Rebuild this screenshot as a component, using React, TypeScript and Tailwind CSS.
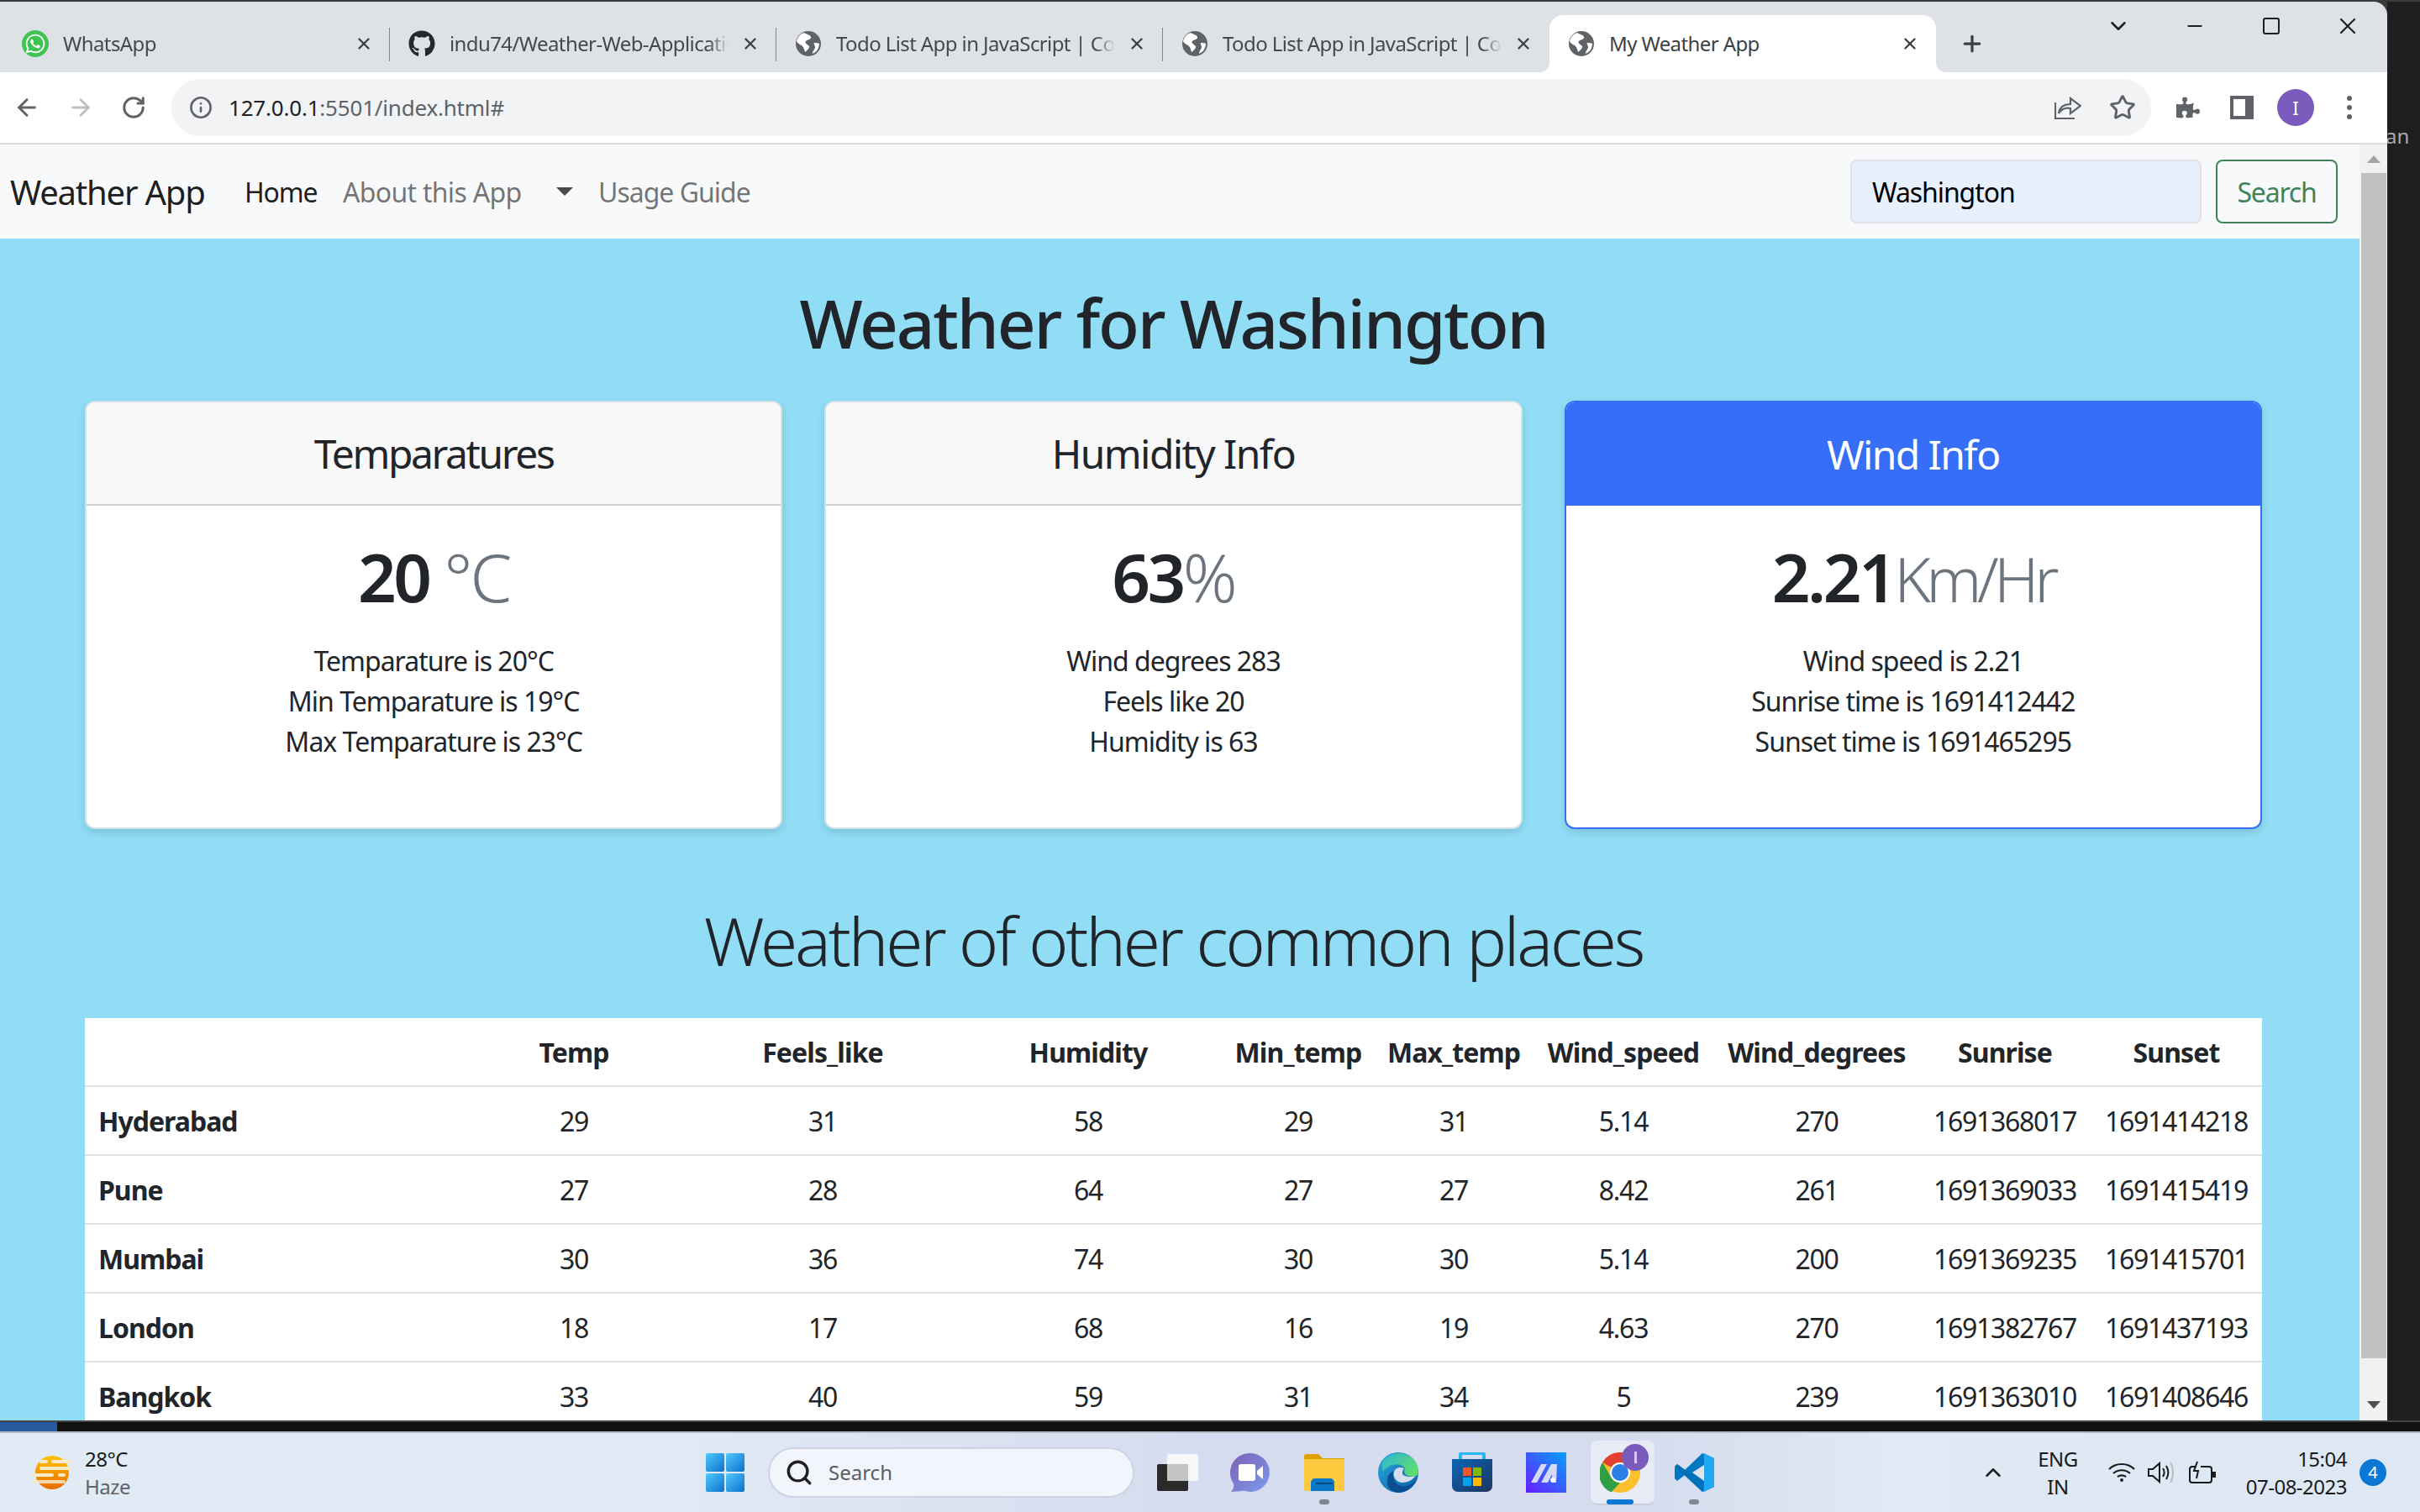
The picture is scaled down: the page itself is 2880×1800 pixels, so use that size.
import React from 'react';
import { ArrowLeft, ArrowRight, RotateCw, Info, Star, ChevronDown, ChevronUp, X, Plus, Minus, Search } from 'lucide-react';
import { FaGithub, FaWhatsapp, FaPuzzlePiece } from 'react-icons/fa';

const Globe = () => (
  <svg viewBox="0 0 32 32" className="w-[32px] h-[32px] shrink-0">
    <circle cx="16" cy="16" r="15" fill="#5f6368" />
    <path d="M11 3c3 2 7 2 8 5 1 3-4 3-6 5-2 2 2 4 4 6 1 1-2 5-5 7-1-3-1-5-3-7-2-2-6-3-7-6 1-5 5-9 9-10z" fill="#fff" />
    <path d="M23 15c3 0 5 0 6 1 0 5-3 10-8 12 0-4 3-5 3-8 0-2-2-4-1-5z" fill="#fff" />
  </svg>
);

const tabs = [
  { title: 'WhatsApp', icon: 'wa' },
  { title: 'indu74/Weather-Web-Application', icon: 'gh' },
  { title: 'Todo List App in JavaScript | CodingNepal', icon: 'globe' },
  { title: 'Todo List App in JavaScript | CodingNepal', icon: 'globe' },
];

const TabIcon = ({ icon }: { icon: string }) => {
  if (icon === 'wa')
    return (
      <div className="w-[32px] h-[32px] rounded-full bg-[#3fc351] flex items-center justify-center shrink-0">
        <FaWhatsapp className="text-white w-[26px] h-[26px]" />
      </div>
    );
  if (icon === 'gh') return <FaGithub className="w-[32px] h-[32px] text-[#24292f] shrink-0" />;
  return <Globe />;
};

const BrowserTab = ({ title, icon, last }: { title: string; icon: string; last?: boolean }) => (
  <div className="relative w-[460px] h-[68px] flex items-center pl-[22px] shrink-0">
    <TabIcon icon={icon} />
    <span className="ml-[17px] w-[332px] overflow-hidden whitespace-nowrap text-[24px] text-[#45484d] tracking-[-0.6px] [mask-image:linear-gradient(to_left,transparent,black_24px)]">
      {title}
    </span>
    <X className="ml-[15px] w-[22px] h-[22px] text-[#3c4043]" strokeWidth={2.6} />
    {!last && <div className="absolute right-0 top-[15px] h-[40px] w-[1px] bg-[#80868b]" />}
  </div>
);

const ActiveTab = () => (
  <div className="relative w-[460px] h-[68px] flex items-center pl-[22px] shrink-0 bg-white rounded-t-[16px]">
    <Globe />
    <span className="ml-[17px] w-[332px] whitespace-nowrap text-[24px] text-[#3c4043] tracking-[-0.6px]">My Weather App</span>
    <X className="ml-[15px] w-[22px] h-[22px] text-[#3c4043]" strokeWidth={2.6} />
    <svg viewBox="0 0 12 12" className="absolute left-[-12px] bottom-0 w-[12px] h-[12px]">
      <path d="M12 0v12H0c7 0 12-5 12-12z" fill="#fff" />
    </svg>
    <svg viewBox="0 0 12 12" className="absolute right-[-12px] bottom-0 w-[12px] h-[12px]">
      <path d="M0 0v12h12C5 12 0 7 0 0z" fill="#fff" />
    </svg>
  </div>
);

const cards = [
  {
    title: 'Temparatures',
    titleClass: 'tracking-[-2.4px]',
    value: '20',
    unit: ' °C',
    unitClass: 'tracking-[-3px]',
    lines: ['Temparature is 20°C', 'Min Temparature is 19°C', 'Max Temparature is 23°C'],
  },
  {
    title: 'Humidity Info',
    titleClass: 'tracking-[-1.6px]',
    value: '63',
    unit: '%',
    unitClass: 'tracking-[-3px]',
    lines: ['Wind degrees 283', 'Feels like 20', 'Humidity is 63'],
  },
  {
    title: 'Wind Info',
    titleClass: 'tracking-[-1.6px]',
    value: '2.21',
    unit: 'Km/Hr',
    unitClass: 'text-[74px] leading-[80px] tracking-[-5.5px]',
    lines: ['Wind speed is 2.21', 'Sunrise time is 1691412442', 'Sunset time is 1691465295'],
    primary: true,
  },
];

const columns = ['Temp', 'Feels_like', 'Humidity', 'Min_temp', 'Max_temp', 'Wind_speed', 'Wind_degrees', 'Sunrise', 'Sunset'];
const widths = [443, 278, 314, 318, 182, 188, 216, 244, 204, 204];

const rows = [
  ['Hyderabad', '29', '31', '58', '29', '31', '5.14', '270', '1691368017', '1691414218'],
  ['Pune', '27', '28', '64', '27', '27', '8.42', '261', '1691369033', '1691415419'],
  ['Mumbai', '30', '36', '74', '30', '30', '5.14', '200', '1691369235', '1691415701'],
  ['London', '18', '17', '68', '16', '19', '4.63', '270', '1691382767', '1691437193'],
  ['Bangkok', '33', '40', '59', '31', '34', '5', '239', '1691363010', '1691408646'],
];

const TaskIcon = ({ children, dot, active }: { children: React.ReactNode; dot?: boolean; active?: boolean }) => (
  <div className="relative w-[88px] h-[95px] flex items-center justify-center">
    {active && <div className="absolute left-[9px] top-[9px] w-[76px] h-[77px] rounded-[8px] bg-[#e7ebf5] border-b-2 border-[#c9cede]" />}
    <div className="relative w-[48px] h-[48px]">{children}</div>
    {dot && <div className="absolute left-[38px] top-[79px] w-[12px] h-[6px] rounded-full bg-[#808590]" />}
    {active && <div className="absolute left-[28px] top-[79px] w-[32px] h-[6px] rounded-full bg-[#0a78d4]" />}
  </div>
);

export default function App() {
  return (
    <div className="w-[2880px] h-[1800px] overflow-hidden bg-[#1c1c1c] flex flex-col font-['Noto_Sans',sans-serif] text-[#212529]">
      <div className="h-[1691px] flex shrink-0 pt-[2px] bg-[#3a3a3a]">
        {/* chrome window */}
        <div className="w-[2841px] h-full flex flex-col rounded-tr-[16px] overflow-hidden shrink-0">
          <div className="h-[84px] bg-[#dee1e6] flex items-start shrink-0">
            <div className="flex items-end h-[84px] pl-[4px]">
              {tabs.map((t, i) => (
                <BrowserTab key={i} title={t.title} icon={t.icon} last={i === 3} />
              ))}
              <ActiveTab />
              <div className="w-[86px] h-[68px] flex items-center justify-center">
                <Plus className="w-[30px] h-[30px] text-[#3c4043]" strokeWidth={2.6} />
              </div>
            </div>
            <div className="ml-auto flex h-[58px] items-center pr-[2px] text-[#1f1f1f]">
              <div className="w-[91px] flex justify-center"><ChevronDown className="w-[30px] h-[30px]" strokeWidth={2} /></div>
              <div className="w-[91px] flex justify-center"><Minus className="w-[26px] h-[26px]" strokeWidth={2} /></div>
              <div className="w-[91px] flex justify-center"><div className="w-[20px] h-[20px] border-2 border-[#1f1f1f] rounded-[3px]" /></div>
              <div className="w-[91px] flex justify-center"><X className="w-[32px] h-[32px]" strokeWidth={1.6} /></div>
            </div>
          </div>

          <div className="h-[84px] bg-white flex items-center shrink-0">
            <div className="w-[64px] flex justify-center"><ArrowLeft className="w-[32px] h-[32px] text-[#5f6368]" strokeWidth={2.2} /></div>
            <div className="w-[64px] flex justify-center"><ArrowRight className="w-[32px] h-[32px] text-[#bdc1c6]" strokeWidth={2.2} /></div>
            <div className="w-[62px] flex justify-center"><RotateCw className="w-[30px] h-[30px] text-[#5f6368]" strokeWidth={2.4} /></div>
            <div className="ml-[14px] w-[2356px] h-[68px] rounded-full bg-[#f1f3f4] flex items-center">
              <Info className="ml-[21px] w-[28px] h-[28px] text-[#5f6368]" strokeWidth={2.2} />
              <span className="ml-[19px] text-[26px] text-[#202124] tracking-[-0.2px]">
                127.0.0.1<span className="text-[#5f6368]">:5501/index.html#</span>
              </span>
              <svg viewBox="0 0 32 28" className="ml-auto w-[32px] h-[28px]" fill="none" stroke="#5f6368" strokeWidth="2.2">
                <path d="M1 8v19h23" />
                <path d="M5 21c1-7 6-11 14-11V3l12 9-12 9v-6c-6-1-11 1-14 6z" />
              </svg>
              <Star className="ml-[33px] mr-[18px] w-[32px] h-[32px] text-[#5f6368]" strokeWidth={2.2} />
            </div>
            <div className="ml-[12px] w-[64px] flex justify-center"><FaPuzzlePiece className="w-[28px] h-[28px] text-[#5f6368]" /></div>
            <div className="w-[64px] flex justify-center">
              <div className="w-[28px] h-[28px] bg-[#5f6368] pl-[4px] py-[4px] pr-[10px]"><div className="w-full h-full bg-white" /></div>
            </div>
            <div className="w-[64px] flex justify-center">
              <div className="w-[44px] h-[44px] rounded-full bg-[#7a5abb] flex items-center justify-center text-white text-[22px]">I</div>
            </div>
            <div className="w-[64px] flex flex-col items-center gap-[5px]">
              <div className="w-[6px] h-[6px] rounded-full bg-[#5f6368]" />
              <div className="w-[6px] h-[6px] rounded-full bg-[#5f6368]" />
              <div className="w-[6px] h-[6px] rounded-full bg-[#5f6368]" />
            </div>
          </div>

          <div className="flex-1 min-h-0 flex border-t-2 border-[#dadce0] bg-white">
            <div className="w-[2808px] min-h-0 overflow-hidden bg-[#90ddf5] shrink-0">
              {/* navbar */}
              <nav className="h-[112px] bg-[#f8f9fa] flex items-center pl-[12px] pr-[26px]">
                <span className="mt-[2px] w-[279px] text-[40px] text-black/90 tracking-[-1.2px]">Weather App</span>
                <span className="mt-[2px] w-[117px] text-[32px] text-black/90 tracking-[-1.2px]">Home</span>
                <span className="mt-[2px] w-[254px] text-[32px] text-black/55 tracking-[-0.7px]">About this App</span>
                <div className="w-[50px]"><div className="w-0 h-0 border-x-[10px] border-x-transparent border-t-[10px] border-t-black/70" /></div>
                <span className="mt-[2px] text-[32px] text-black/55 tracking-[-1px]">Usage Guide</span>
                <div className="ml-auto w-[418px] h-[76px] rounded-[8px] border-2 border-[#dee2e6] bg-[#e8f0fe] pl-[24px] pt-[2px] flex items-center text-[32px] text-black tracking-[-1.1px]">Washington</div>
                <button className="ml-[17px] w-[145px] h-[76px] rounded-[8px] border-2 border-[#3f8459] pt-[2px] text-[32px] text-[#3f8459] tracking-[-1.2px]">Search</button>
              </nav>

              <main className="ml-[101px] w-[2591px]">
                <h1 className="mt-[52px] mb-[45px] text-center text-[80px] leading-[96px] font-medium tracking-[-2.2px]">Weather for Washington</h1>

                <div className="grid grid-cols-3 gap-[50px]">
                  {cards.map((c) => (
                    <div
                      key={c.title}
                      className={`h-[510px] rounded-[12px] bg-white overflow-hidden border-2 shadow-[0_4px_10px_rgba(0,0,0,0.12)] ${c.primary ? 'border-[#366ef7]' : 'border-[#d3e3e9]'}`}
                    >
                      <div
                        className={`h-[123px] flex items-center justify-center text-[48px] ${c.titleClass} ${c.primary ? 'bg-[#366ef7] text-white' : 'bg-[#f8f8f8] border-b-2 border-[#d0d0d0]'}`}
                      >
                        {c.title}
                      </div>
                      <div className="pt-[36px] text-center">
                        <div className="text-[80px] leading-[96px] whitespace-pre">
                          <span className="font-semibold tracking-[-3.5px]">{c.value}</span>
                          <span className={`font-light text-[#6c757d] ${c.unitClass}`}>{c.unit}</span>
                        </div>
                        <div className="mt-[29px] text-[32px] leading-[48px] tracking-[-1px]">
                          {c.lines.map((l) => (
                            <div key={l}>{l}</div>
                          ))}
                        </div>
                      </div>
                    </div>
                  ))}
                </div>

                <h2 className="mt-[84px] mb-[45px] text-center text-[80px] leading-[96px] font-light tracking-[-3.2px]">Weather of other common places</h2>

                <table className="table-fixed w-[2591px] bg-white text-[32px] border-collapse">
                  <colgroup>
                    {widths.map((w, i) => (
                      <col key={i} style={{ width: w }} />
                    ))}
                  </colgroup>
                  <thead>
                    <tr className="h-[81px] border-b-2 border-[#dee2e6]">
                      <th />
                      {columns.map((c) => (
                        <th key={c} className="pt-[2px] font-bold text-center whitespace-nowrap tracking-[-0.9px]">{c}</th>
                      ))}
                    </tr>
                  </thead>
                  <tbody>
                    {rows.map((r) => (
                      <tr key={r[0]} className="h-[82px] border-b-2 border-[#dee2e6]">
                        {r.map((v, i) =>
                          i === 0 ? (
                            <th key={i} className="pt-[2px] pl-[16px] text-left font-bold tracking-[-1px]">{v}</th>
                          ) : (
                            <td key={i} className="pt-[2px] text-center whitespace-nowrap tracking-[-1.3px]">{v}</td>
                          ),
                        )}
                      </tr>
                    ))}
                  </tbody>
                </table>
              </main>
            </div>

            {/* scrollbar */}
            <div className="w-[33px] bg-[#f1f1f1] flex flex-col items-center">
              <div className="h-[34px] flex items-center justify-center">
                <div className="w-0 h-0 border-x-[8px] border-x-transparent border-b-[9px] border-b-[#a3a3a3]" />
              </div>
              <div className="w-[30px] h-[1411px] bg-[#c1c1c1]" />
              <div className="flex-1 flex items-end justify-center pb-[14px]">
                <div className="w-0 h-0 border-x-[8px] border-x-transparent border-t-[9px] border-t-[#505050]" />
              </div>
            </div>
          </div>
        </div>

        {/* what shows of the editor behind */}
        <div className="flex-1 bg-[#1e1e1e] overflow-hidden text-[24px] text-[#aaa] pt-[142px]">
          <div className="ml-[-2px]">an</div>
        </div>
      </div>

      <div className="h-[13px] shrink-0 bg-[#111] border-t-2 border-[#444]">
        <div className="w-[68px] h-full bg-[#265a9e]" />
      </div>

      {/* taskbar */}
      <div className="h-[96px] shrink-0 flex items-center border-t-2 border-[#b4b8c2] bg-[linear-gradient(90deg,#e0ebf5_0%,#e2ebf5_25%,#d5dcef_50%,#d5dcee_68%,#e0e9f4_78%,#dde8f4_100%)] text-[24px]">
        <div className="w-[840px] flex items-center pl-[38px] shrink-0">
          <svg viewBox="0 0 48 44" className="w-[48px] h-[44px]">
            <defs>
              <linearGradient id="sun" x1="0" y1="0" x2="0" y2="1">
                <stop offset="0" stopColor="#ffc400" />
                <stop offset="1" stopColor="#e86a00" />
              </linearGradient>
            </defs>
            <circle cx="24" cy="22" r="20" fill="url(#sun)" />
            <g fill="#f6e9c8">
              <rect x="9" y="7" width="10" height="4" rx="2" />
              <rect x="23" y="7" width="25" height="4" rx="2" />
              <rect x="9" y="15" width="39" height="4" rx="2" />
              <rect x="0" y="23" width="26" height="4" rx="2" />
              <rect x="31" y="23" width="9" height="4" rx="2" />
              <rect x="0" y="31" width="40" height="4" rx="2" opacity=".85" />
            </g>
          </svg>
          <div className="ml-[15px] leading-[33px] tracking-[-0.5px]">
            <div className="text-[#1a1a1a]">28°C</div>
            <div className="text-[#5f6368]">Haze</div>
          </div>
        </div>

        <svg viewBox="0 0 46 46" className="w-[46px] h-[46px] shrink-0">
          <defs>
            <linearGradient id="win" x1="0" y1="0" x2="1" y2="1">
              <stop offset="0" stopColor="#52c8fa" />
              <stop offset="1" stopColor="#0a72cf" />
            </linearGradient>
          </defs>
          <rect x="0" y="0" width="22" height="22" rx="2" fill="url(#win)" />
          <rect x="24" y="0" width="22" height="22" rx="2" fill="url(#win)" />
          <rect x="0" y="24" width="22" height="22" rx="2" fill="url(#win)" />
          <rect x="24" y="24" width="22" height="22" rx="2" fill="url(#win)" />
        </svg>

        <div className="ml-[28px] w-[436px] h-[60px] rounded-full bg-[#f2f5fb] border-2 border-[#cdd3e3] flex items-center pl-[18px] shrink-0">
          <Search className="w-[34px] h-[34px] text-[#1f1f1f]" strokeWidth={2.4} />
          <span className="ml-[18px] text-[#5a5d66]">Search</span>
        </div>

        <div className="w-[94px] flex justify-center pl-[8px] shrink-0">
          <svg viewBox="0 0 49 44" className="w-[49px] h-[44px]">
            <rect x="0" y="12" width="37" height="32" rx="2" fill="#2a2a2a" />
            <rect x="12" y="0" width="37" height="32" rx="2" fill="#f7f7f7" />
            <rect x="12" y="12" width="25" height="20" fill="#c4c4c4" />
          </svg>
        </div>

        <TaskIcon>
          <svg viewBox="0 0 48 48" className="w-full h-full">
            <defs>
              <linearGradient id="meet" x1="0" y1="0" x2="1" y2="1">
                <stop offset="0" stopColor="#7b5fb4" />
                <stop offset="1" stopColor="#7c9cec" />
              </linearGradient>
            </defs>
            <path d="M24 1a23 23 0 1 1-8 44.6C11 47 6 46.500 1 47c2-2 4-5 3-10A23 23 0 0 1 24 1z" fill="url(#meet)" />
            <rect x="10" y="14" width="20" height="20" rx="3" fill="#fff" />
            <path d="M32 22l7-6v16l-7-6z" fill="#fff" />
          </svg>
        </TaskIcon>
        <TaskIcon dot>
          <svg viewBox="0 0 48 44" className="w-full h-full">
            <path d="M0 3a3 3 0 0 1 3-3h14l5 5h26v6H0z" fill="#dfa000" />
            <path d="M0 6h48v36a2 2 0 0 1-2 2H2a2 2 0 0 1-2-2z" fill="#fdc93f" />
            <path d="M8 44V34a5 5 0 0 1 5-5h18a5 5 0 0 1 5 5v10z" fill="#0a78c9" />
            <rect x="14" y="34" width="20" height="2" fill="#07497f" />
          </svg>
        </TaskIcon>
        <TaskIcon>
          <svg viewBox="0 0 48 48" className="w-full h-full">
            <defs>
              <linearGradient id="edge" x1="0" y1="0" x2="1" y2="1">
                <stop offset="0" stopColor="#2aa8dc" />
                <stop offset="1" stopColor="#0a5ea8" />
              </linearGradient>
              <linearGradient id="edge2" x1="0" y1="0" x2="1" y2="0.6">
                <stop offset="0" stopColor="#2fb5d8" />
                <stop offset="1" stopColor="#5cdc6e" />
              </linearGradient>
            </defs>
            <circle cx="24" cy="24" r="24" fill="url(#edge)" />
            <path d="M6 10C12 1 30-3 41 7c6 5 8 14 6 20-3 2-8 2-11 1-4-1-6-5-4-9-4-6-14-6-21-1-2 1-4 3-5 5-2-5-2-9 0-13z" fill="url(#edge2)" />
            <path d="M19 22c-4 8 3 20 14 18 3 0 7-2 12-7-3 8-11 15-21 15 -8-1-14-6-13-14 0-6 3-10 8-12z" fill="#0b4e92" />
            <path d="M31 19c-5-2-10-1-12 4-2 6 3 13 10 13 6 0 12-3 16-8-5 2-12 1-15-1-2-2-1-5 1-8z" fill="#d5dcef" />
          </svg>
        </TaskIcon>
        <TaskIcon>
          <svg viewBox="0 0 48 48" className="w-full h-full">
            <defs>
              <linearGradient id="store" x1="0" y1="0" x2="1" y2="1">
                <stop offset="0" stopColor="#0a66b5" />
                <stop offset="1" stopColor="#1f3560" />
              </linearGradient>
            </defs>
            <path d="M10 10V3a2 2 0 0 1 2-2h24a2 2 0 0 1 2 2v7" fill="none" stroke="#26b6f5" strokeWidth="4" />
            <path d="M0 8h48v32a7 7 0 0 1-7 7H7a7 7 0 0 1-7-7z" fill="url(#store)" />
            <rect x="13" y="18" width="10" height="10" fill="#f25622" />
            <rect x="25" y="18" width="10" height="10" fill="#7fba00" />
            <rect x="13" y="30" width="10" height="10" fill="#00a4ef" />
            <rect x="25" y="30" width="10" height="10" fill="#ffb900" />
          </svg>
        </TaskIcon>
        <TaskIcon>
          <svg viewBox="0 0 48 48" className="w-full h-full">
            <defs>
              <linearGradient id="ma" x1="0" y1="1" x2="1" y2="0">
                <stop offset="0" stopColor="#6a1cff" />
                <stop offset="1" stopColor="#05a0ff" />
              </linearGradient>
            </defs>
            <rect width="48" height="48" fill="url(#ma)" />
            <path d="M6 36l12-22h7L13 36zM18 36l12-22h7l-1 22h-5v-10l-5 10z" fill="#d6daf6" />
            <circle cx="32" cy="33" r="3" fill="#fff" />
          </svg>
        </TaskIcon>
        <TaskIcon active>
          <svg viewBox="0 0 48 48" className="w-full h-full">
            <circle cx="24" cy="24" r="24" fill="#fbc02d" />
            <path d="M3.200 12A24 24 0 0 1 44.800 12H24a12 12 0 0 0-10.400 6z" fill="#e53f30" />
            <path d="M3.200 12L13.600 30a12 12 0 0 0 10.400 6L13.600 47.600A24 24 0 0 1 3.200 12z" fill="#2f9e44" />
            <circle cx="24" cy="24" r="12" fill="#fff" />
            <circle cx="24" cy="24" r="10" fill="#2f7fe8" />
          </svg>
          <div className="absolute left-[26px] top-[-10px] w-[32px] h-[32px] rounded-full bg-[#7a5abb] flex items-center justify-center">
            <div className="w-[3px] h-[14px] bg-[#d8cdf0]" />
          </div>
        </TaskIcon>
        <TaskIcon dot>
          <svg viewBox="0 0 48 48" className="w-full h-full">
            <path d="M34 1L13 21 4 14l-3 3v14l3 3 9-7 21 20 14-6V7z" fill="#0078c4" />
            <path d="M1 17l33 30 0-12L4 14z" fill="#006cb0" opacity=".7" />
            <path d="M48 7L36 1v46l12-6z" fill="#22a7f5" />
            <path d="M36 15L22 24l14 10z" fill="#dfe4f0" />
          </svg>
        </TaskIcon>

        <div className="ml-[292px] w-[40px] flex justify-center shrink-0">
          <ChevronUp className="w-[30px] h-[30px] text-[#1f1f1f]" strokeWidth={2} />
        </div>
        <div className="ml-[22px] w-[70px] text-center leading-[33px] text-[#1a1a1a] tracking-[-0.5px] shrink-0">
          <div>ENG</div>
          <div>IN</div>
        </div>
        <svg viewBox="0 0 32 24" className="ml-[25px] w-[32px] h-[24px] shrink-0" fill="none" stroke="#1a1a1a" strokeWidth="2.2">
          <path d="M1 8c8-8 22-8 30 0" />
          <path d="M6 13c6-5 14-5 20 0" />
          <path d="M11 17c3-2 7-2 10 0" />
          <circle cx="16" cy="21" r="2" fill="#1a1a1a" stroke="none" />
        </svg>
        <svg viewBox="0 0 32 28" className="ml-[15px] w-[32px] h-[28px] shrink-0" fill="none" stroke="#1a1a1a" strokeWidth="2">
          <path d="M1 10v8h5l8 7V3L6 10z" />
          <path d="M18 9c2 3 2 7 0 10" />
          <path d="M22 6c3 5 3 11 0 16" />
          <path d="M27 2c4 7 4 17 0 24" stroke="#b9bec8" />
        </svg>
        <svg viewBox="0 0 34 28" className="ml-[16px] w-[34px] h-[28px] shrink-0" fill="none" stroke="#1a1a1a" strokeWidth="2">
          <path d="M10 7H5a3 3 0 0 0-3 3v13a3 3 0 0 0 3 3h20a3 3 0 0 0 3-3V10a3 3 0 0 0-3-3H15" />
          <path d="M29 13h4v7h-4z" fill="#1a1a1a" stroke="none" />
          <path d="M11 1L7 12h5l-2 9" />
        </svg>
        <div className="ml-auto text-right leading-[33px] text-[#1a1a1a] tracking-[-0.5px] shrink-0 whitespace-nowrap">
          <div>15:04</div>
          <div>07-08-2023</div>
        </div>
        <div className="ml-[15px] mr-[40px] w-[32px] h-[32px] rounded-full bg-[#0a78d4] text-white text-[20px] flex items-center justify-center shrink-0">4</div>
      </div>
    </div>
  );
}
